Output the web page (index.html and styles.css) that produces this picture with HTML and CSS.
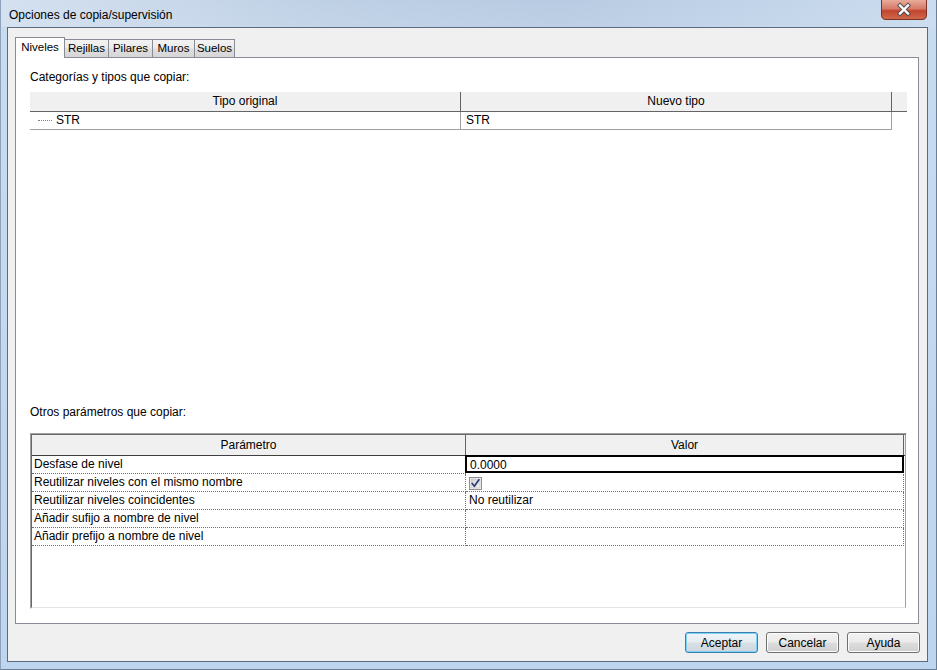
FILE: index.html
```html
<!DOCTYPE html>
<html lang="es">
<head>
<meta charset="utf-8">
<title>Opciones de copia/supervisión</title>
<link rel="stylesheet" href="styles.css">
</head>
<body>
<div class="window">
  <div class="titlebar">
    <span class="title">Opciones de copia/supervisión</span>
    <div class="close">
      <svg width="46" height="20" viewBox="0 0 46 20">
        <defs>
          <linearGradient id="cg" x1="0" y1="0" x2="0" y2="1">
            <stop offset="0" stop-color="#e9ab9b"/>
            <stop offset="0.45" stop-color="#d57a66"/>
            <stop offset="0.55" stop-color="#c2442f"/>
            <stop offset="1" stop-color="#cf6a4c"/>
          </linearGradient>
        </defs>
        <path d="M0.5 0 V15 Q0.5 19.5 5 19.5 H41 Q45.5 19.5 45.5 15 V0" fill="url(#cg)" stroke="#7a3226" stroke-width="1"/>
        <path d="M19 5.5 L27 13.5 M27 5.5 L19 13.5" stroke="#4a4a4a" stroke-width="4.2" stroke-linecap="square"/>
        <path d="M19 5.5 L27 13.5 M27 5.5 L19 13.5" stroke="#ffffff" stroke-width="2.4" stroke-linecap="square"/>
      </svg>
    </div>
  </div>
  <div class="client">
    <div class="tabs">
      <div class="tab active t-niveles">Niveles</div>
      <div class="tab t-rejillas">Rejillas</div>
      <div class="tab t-pilares">Pilares</div>
      <div class="tab t-muros">Muros</div>
      <div class="tab t-suelos">Suelos</div>
    </div>
    <div class="panel">
      <div class="label">Categorías y tipos que copiar:</div>
      <div class="types">
        <div class="types-head">
          <div class="th th-c">Tipo original</div>
          <div class="th th-c">Nuevo tipo</div>
          <div class="th th-fill"></div>
        </div>
        <div class="types-row">
          <div class="td td-tree"><span class="tree-line"></span><span>STR</span></div>
          <div class="td td-val">STR</div>
        </div>
      </div>
      <div class="spacer"></div>
      <div class="label label2">Otros parámetros que copiar:</div>
      <div class="params">
        <div class="params-inner">
          <div class="p-head">
            <div class="ph">Parámetro</div>
            <div class="ph">Valor</div>
          </div>
          <div class="p-row">
            <div class="pc pc-name">Desfase de nivel</div>
            <div class="pc pc-val pc-edit">0.0000</div>
          </div>
          <div class="p-row">
            <div class="pc pc-name">Reutilizar niveles con el mismo nombre</div>
            <div class="pc pc-val">
              <svg class="chk" width="13" height="13" viewBox="0 0 13 13">
                <defs>
                  <linearGradient id="kg" x1="0" y1="0" x2="1" y2="1">
                    <stop offset="0" stop-color="#d2d2d2"/>
                    <stop offset="1" stop-color="#f4f4f4"/>
                  </linearGradient>
                </defs>
                <rect x="0.5" y="0.5" width="12" height="12" fill="#f4f4f4" stroke="#8f8f8f"/>
                <rect x="2" y="2" width="9" height="9" fill="url(#kg)" stroke="#bdbdbd" stroke-width="0.6"/>
                <path d="M3.2 6.4 L5.4 9.3 L9.9 2.8" fill="none" stroke="#2b3f78" stroke-width="1.7" stroke-linecap="round" stroke-linejoin="round"/>
              </svg>
            </div>
          </div>
          <div class="p-row">
            <div class="pc pc-name">Reutilizar niveles coincidentes</div>
            <div class="pc pc-val">No reutilizar</div>
          </div>
          <div class="p-row">
            <div class="pc pc-name">Añadir sufijo a nombre de nivel</div>
            <div class="pc pc-val"></div>
          </div>
          <div class="p-row">
            <div class="pc pc-name">Añadir prefijo a nombre de nivel</div>
            <div class="pc pc-val"></div>
          </div>
        </div>
      </div>
    </div>
    <div class="buttons">
      <button class="btn btn-default">Aceptar</button>
      <button class="btn">Cancelar</button>
      <button class="btn">Ayuda</button>
    </div>
  </div>
</div>
</body>
</html>
```

FILE: styles.css
```css
* { box-sizing: border-box; }
html, body { margin: 0; padding: 0; }
body {
  width: 937px;
  height: 670px;
  overflow: hidden;
  font-family: "Liberation Sans", Arial, sans-serif;
  font-size: 12px;
  color: #000;
  background: #b8cfe8;
}
.window {
  width: 937px;
  height: 670px;
  display: flex;
  flex-direction: column;
  background: linear-gradient(180deg, #bfd2e8 0px, #c9dbef 28px, #bed5ef 100%);
  border-left: 1px solid #8ea3bb;
  border-right: 1px solid #6b7f96;
  border-bottom: 1px solid #6b7f96;
}
.titlebar {
  height: 27px;
  flex: none;
  display: flex;
  align-items: flex-start;
  padding-left: 8px;
  background: linear-gradient(90deg, rgba(214,226,240,0.9) 0%, rgba(190,206,226,0.5) 35%, rgba(176,196,220,0.5) 60%, rgba(206,222,240,0.8) 100%);
}
.title {
  margin-top: 8px;
  line-height: 15px;
  color: #000;
}
.close {
  margin-left: auto;
  margin-right: 9px;
  height: 20px;
  width: 46px;
}
.close svg { display: block; }
.client {
  flex: 1;
  margin: 0 8px 7px 6px;
  border: 1px solid #5a6b80;
  background: #f0f0f0;
  padding: 9px 8px 8px 7px;
  display: flex;
  flex-direction: column;
}
.tabs {
  height: 21px;
  flex: none;
  display: flex;
  align-items: flex-end;
  margin-bottom: -1px;
  position: relative;
  z-index: 1;
}
.tab {
  height: 18px;
  margin-bottom: 1px;
  margin-left: -1px;
  border: 1px solid #898c95;
  border-bottom: none;
  background: linear-gradient(180deg, #f3f3f3 0%, #ebebeb 45%, #dedede 55%, #d6d6d6 100%);
  text-align: center;
  line-height: 17px;
  font-size: 11.5px;
  white-space: nowrap;
}
.tab.active {
  height: 21px;
  margin-bottom: 0;
  margin-left: 0;
  background: #fff;
  line-height: 15px;
  padding-top: 2px;
}
.t-niveles { width: 50px; }
.t-rejillas { width: 45px; }
.t-pilares { width: 45px; }
.t-muros { width: 43px; }
.t-suelos { width: 41px; }
.panel {
  flex: 1;
  border: 1px solid #898c95;
  background: #fff;
  padding: 12px 11px 14px 14px;
  display: flex;
  flex-direction: column;
}
.label {
  line-height: 15px;
  margin-bottom: 7px;
  flex: none;
}
.label2 { margin-bottom: 13px; }
.spacer { flex: 1; }
.types { flex: none; }
.types-head {
  display: grid;
  grid-template-columns: 431px 431px 15px;
  height: 20px;
  background: #f0f0f0;
  border-bottom: 1px solid #646464;
}
.th {
  line-height: 19px;
  text-align: center;
}
.th-c { border-right: 1px solid #646464; }
.types-row {
  display: grid;
  grid-template-columns: 431px 431px;
  width: 862px;
  height: 18px;
  border-bottom: 1px solid #a0a0a0;
}
.td {
  line-height: 17px;
  border-right: 1px solid #a0a0a0;
  white-space: nowrap;
}
.td-tree {
  display: flex;
  align-items: center;
}
.tree-line {
  display: inline-block;
  width: 14px;
  height: 1px;
  margin-left: 8px;
  margin-right: 4px;
  border-bottom: 1px dotted #808080;
}
.td-val { padding-left: 5px; }
.params {
  flex: none;
  height: 176px;
  border-top: 1px solid #a0a0a0;
  border-left: 1px solid #a0a0a0;
  border-right: 1px solid #ffffff;
  border-bottom: 1px solid #ffffff;
}
.params-inner {
  height: 100%;
  border-top: 1px solid #696969;
  border-left: 1px solid #696969;
  border-right: 1px solid #a0a0a0;
  border-bottom: 1px solid #e3e3e3;
  background: #fff;
}
.p-head {
  display: grid;
  grid-template-columns: 434px 438px;
  height: 21px;
  background: #f0f0f0;
  border-bottom: 1px solid #404040;
}
.ph {
  line-height: 20px;
  text-align: center;
  border-right: 1px solid #646464;
}
.p-row {
  display: grid;
  grid-template-columns: 434px 438px;
  height: 18px;
}
.pc {
  line-height: 17px;
  border-bottom: 1px dotted #707070;
  border-right: 1px dotted #707070;
  white-space: nowrap;
}
.pc-name { padding-left: 2px; }
.pc-val { padding-left: 3px; }
.pc-edit {
  margin: -1px 0 0 -1px;
  padding-left: 3px;
  line-height: 16px;
  height: 18px;
  border: 2px solid #000;
  position: relative;
}
.chk {
  display: block;
  margin-top: 3px;
}
.buttons {
  flex: none;
  display: flex;
  justify-content: flex-end;
  gap: 8px;
  margin-top: 8px;
  margin-right: -1px;
}
.btn {
  width: 73px;
  height: 21px;
  padding: 0;
  font-family: "Liberation Sans", Arial, sans-serif;
  font-size: 12px;
  color: #000;
  border: 1px solid #707070;
  border-radius: 3px;
  background: linear-gradient(180deg, #f2f2f2 0%, #ebebeb 48%, #dddddd 52%, #cfcfcf 100%);
  box-shadow: inset 0 0 0 1px #fcfcfc;
}
.btn-default {
  border-color: #3c7fb1;
  box-shadow: inset 0 0 0 1px #7ed2f6;
  background: linear-gradient(180deg, #eef4f8 0%, #e6edf2 48%, #d8e0e6 52%, #cdd6dc 100%);
}
```
